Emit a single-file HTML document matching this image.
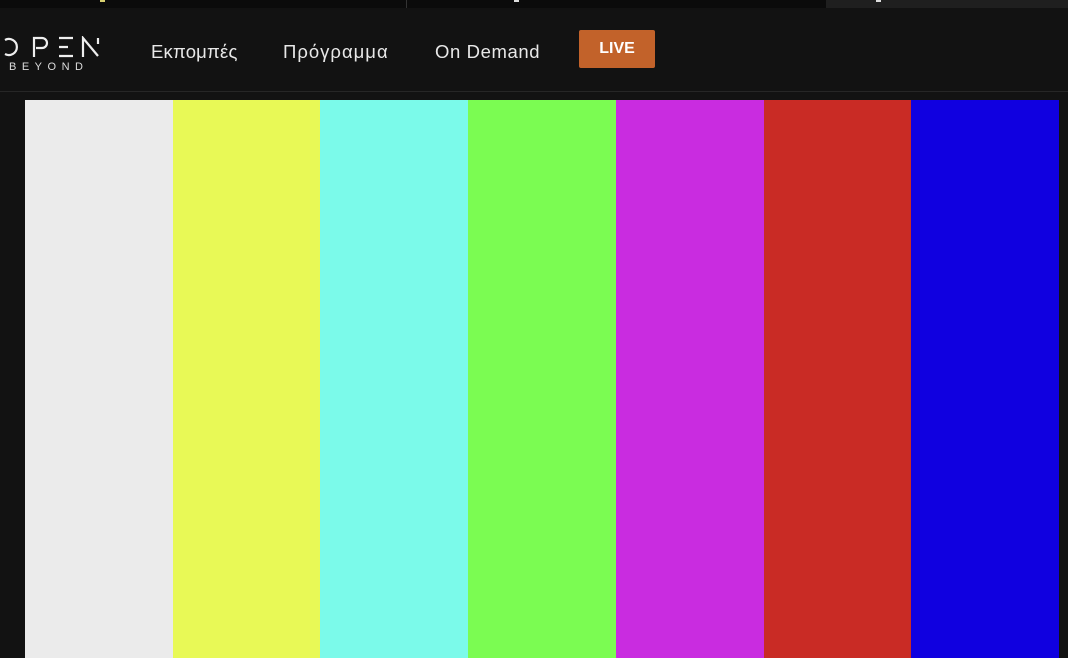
<!DOCTYPE html>
<html><head><meta charset="utf-8"><style>
*{margin:0;padding:0;box-sizing:border-box}
body{width:1068px;height:658px;background:#121212;position:relative;overflow:hidden;font-family:"Liberation Sans",sans-serif}
.top{position:absolute;left:0;top:0;width:1068px;height:8px;background:#0b0b0b}
.div{position:absolute;top:0;left:406px;width:1px;height:8px;background:#333}
.gray{position:absolute;top:0;left:826px;width:242px;height:8px;background:#1f1f1f}
.mk{position:absolute;top:0;width:5px;height:2px}
.line{position:absolute;top:91px;left:0;width:1068px;height:1px;background:#262626}
.nav{position:absolute;top:41px;color:#e8e8e8;font-size:18.5px;white-space:nowrap}
.live{position:absolute;left:579px;top:30px;width:76px;height:38px;background:#c2622a;border-radius:2px;color:#fff;font-weight:bold;font-size:16px;text-align:center;line-height:38px}
.bars{position:absolute;left:25px;top:100px;width:1034px;height:558px;display:flex}
.bars div{flex:1}
.beyond{position:absolute;left:9px;top:61px;color:#ddd;font-size:11px;letter-spacing:5.5px}
</style></head><body>
<div class="top"></div><div class="div"></div><div class="gray"></div>
<div class="mk" style="left:100px;background:#d8d070"></div>
<div class="mk" style="left:514px;background:#ddd"></div>
<div class="mk" style="left:876px;background:#ddd"></div>
<svg style="position:absolute;left:2px;top:36px" width="100" height="22" viewBox="0 0 100 22" fill="none" stroke="#eee" stroke-width="2.2">
<path d="M3 4 A8 8 0 1 1 3 18"/>
<path d="M32 21 V2 H40 A5 5 0 0 1 40 12 H34"/>
<path d="M57 2 H71 M57 11 H66 M57 20 H71"/>
<path d="M81 21 V2 L96 20 M96 2 V8"/>
</svg>
<div class="beyond">BEYOND</div>
<div class="nav" style="left:151px;letter-spacing:0.2px">Εκπομπές</div>
<div class="nav" style="left:283px;letter-spacing:1px">Πρόγραμμα</div>
<div class="nav" style="left:435px;letter-spacing:0.6px">On Demand</div>
<div class="live">LIVE</div>
<div class="line"></div>
<div class="bars">
<div style="background:#ebebeb"></div>
<div style="background:#e8f956"></div>
<div style="background:#7bfaea"></div>
<div style="background:#7bfc52"></div>
<div style="background:#c92ce0"></div>
<div style="background:#c92b25"></div>
<div style="background:#1000e0"></div>
</div>
</body></html>
